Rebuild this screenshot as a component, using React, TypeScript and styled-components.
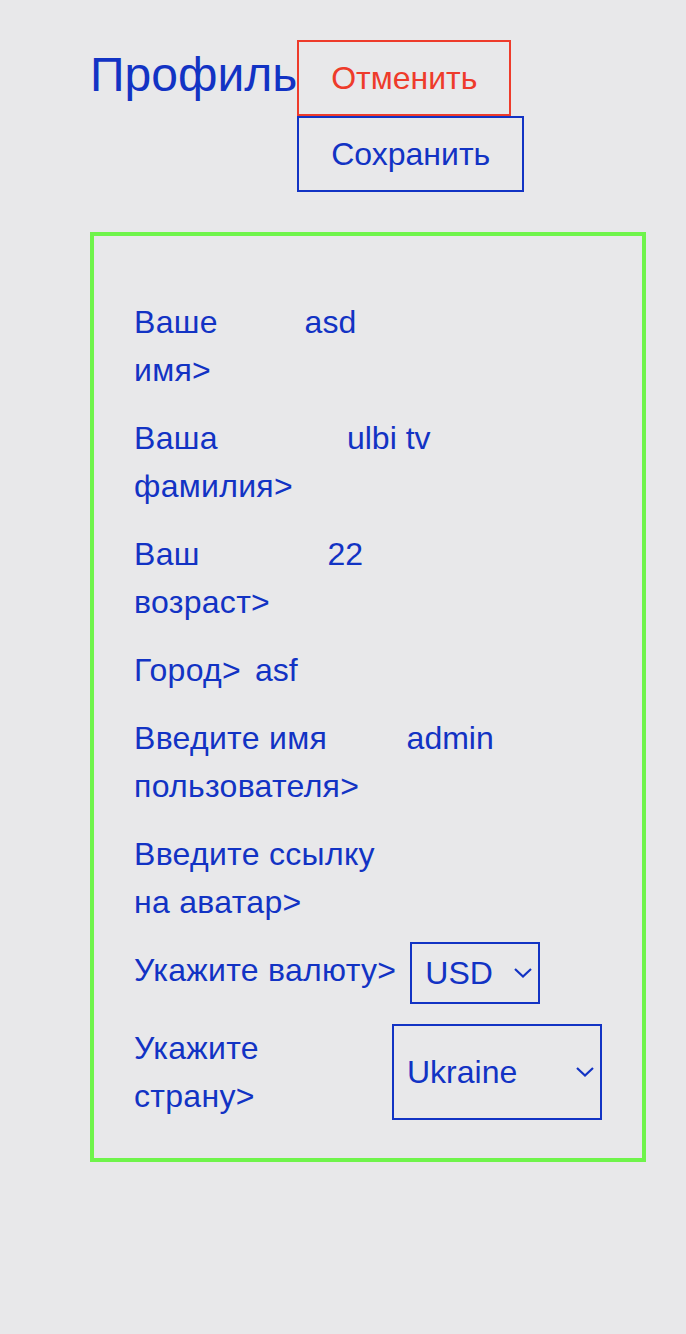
import React from "react";
import styled, { createGlobalStyle } from "styled-components";

const BLUE = "#1233c4";
const RED = "#ee3b2b";
const GREEN = "#6ff44b";

const fields = [
  { label: "Ваше имя>", value: "asd" },
  { label: "Ваша фамилия>", value: "ulbi tv" },
  { label: "Ваш возраст>", value: "22" },
  { label: "Город>", value: "asf" },
  { label: "Введите имя пользователя>", value: "admin" },
  { label: "Введите ссылку на аватар>", value: "" },
];

export default function App() {
  return (
    <>
      <GlobalStyle />
      <Page>
        <Header>
          <Title>Профиль</Title>
          <Buttons>
            <Button $color={RED}>Отменить</Button>
            <Button $color={BLUE}>Сохранить</Button>
          </Buttons>
        </Header>

        <Card>
          {fields.map((f) => (
            <Row key={f.label}>
              <Label>{f.label}</Label>
              <Input defaultValue={f.value} />
            </Row>
          ))}

          <Row>
            <Label>Укажите валюту&gt;</Label>
            <SelectWrap $width={130} $raise={4}>
              <Select defaultValue="USD">
                <option value="RUB">RUB</option>
                <option value="EUR">EUR</option>
                <option value="USD">USD</option>
              </Select>
              <Chevron />
            </SelectWrap>
          </Row>

          <Row>
            <Label>Укажите страну&gt;</Label>
            <SelectWrap $width={210} $raise={0}>
              <Select defaultValue="Ukraine">
                <option value="Armenia">Armenia</option>
                <option value="Russia">Russia</option>
                <option value="Belarus">Belarus</option>
                <option value="Kazakhstan">Kazakhstan</option>
                <option value="Ukraine">Ukraine</option>
              </Select>
              <Chevron />
            </SelectWrap>
          </Row>
        </Card>
      </Page>
    </>
  );
}

function Chevron() {
  return (
    <ChevronIcon width="18" height="10" viewBox="0 0 18 10" fill="none">
      <path d="M1 1l8 7.5L17 1" stroke={BLUE} strokeWidth="2.2" />
    </ChevronIcon>
  );
}

const GlobalStyle = createGlobalStyle`
  html, body {
    margin: 0;
    background: #e8e8ea;
    font-family: "Liberation Sans", Arial, sans-serif;
  }
`;

const Page = styled.div`
  min-height: 1334px;
  box-sizing: border-box;
  padding: 40px 0 0 90px;
`;

const Header = styled.div`
  display: flex;
  align-items: flex-start;
`;

const Title = styled.h1`
  margin: 0;
  font-size: 48px;
  font-weight: normal;
  line-height: 70px;
  color: ${BLUE};
`;

const Buttons = styled.div`
  display: flex;
  flex-direction: column;
  align-items: flex-start;
`;

const Button = styled.button<{ $color: string }>`
  font-family: inherit;
  font-size: 32px;
  line-height: 40px;
  padding: 16px 32px;
  background: transparent;
  border: 2px solid ${(p) => p.$color};
  color: ${(p) => p.$color};
  cursor: pointer;
`;

const Card = styled.div`
  box-sizing: border-box;
  width: 556px;
  margin-top: 40px;
  border: 4px solid ${GREEN};
  padding: 62px 40px 38px 40px;
  display: flex;
  flex-direction: column;
  gap: 20px;
`;

const Row = styled.div`
  display: flex;
`;

const Label = styled.div`
  flex: 0 1 auto;
  margin-right: 14px;
  font-size: 32px;
  line-height: 48px;
  letter-spacing: 0.3px;
  color: ${BLUE};
`;

const Input = styled.input`
  flex: 0 1 323px;
  width: 323px;
  min-width: 0;
  align-self: flex-start;
  height: 48px;
  padding: 0;
  border: none;
  outline: none;
  background: transparent;
  font-family: inherit;
  font-size: 32px;
  color: ${BLUE};
`;

const SelectWrap = styled.div<{ $width: number; $raise: number }>`
  position: relative;
  display: flex;
  flex: 0 0 ${(p) => p.$width}px;
  margin-top: -${(p) => p.$raise}px;
`;

const Select = styled.select`
  appearance: none;
  flex: 1;
  width: 100%;
  min-width: 0;
  min-height: 62px;
  margin: 0;
  padding: 0 36px 0 13px;
  border: 2px solid ${BLUE};
  border-radius: 0;
  background: transparent;
  font-family: inherit;
  font-size: 32px;
  color: ${BLUE};
  outline: none;
`;

const ChevronIcon = styled.svg`
  position: absolute;
  right: 8px;
  top: 50%;
  margin-top: -5px;
  pointer-events: none;
`;
